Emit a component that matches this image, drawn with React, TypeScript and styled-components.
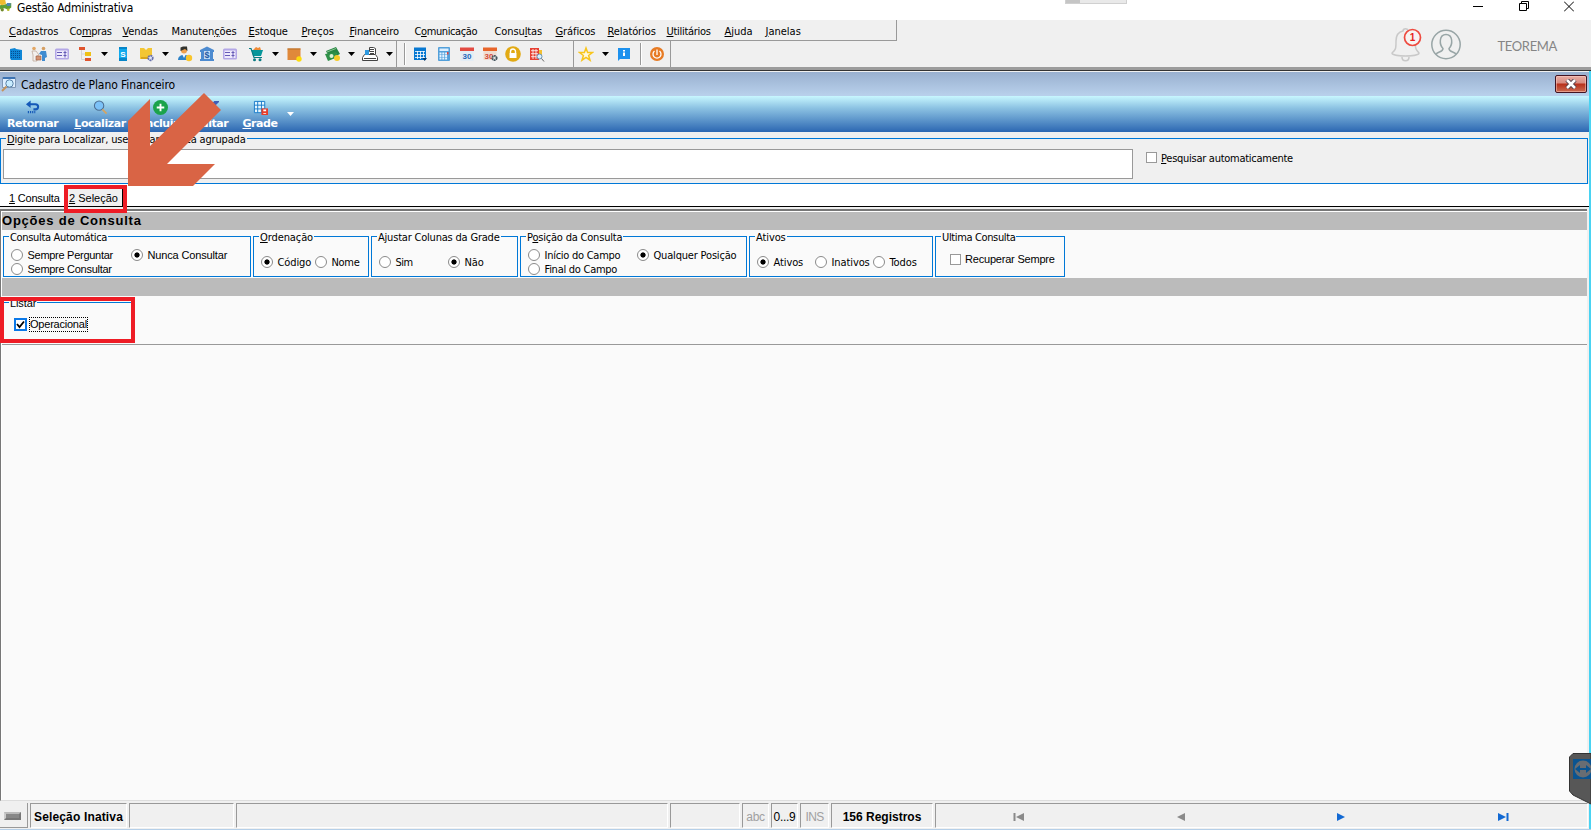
import type { ReactNode } from "react";
import styled, { createGlobalStyle } from "styled-components";

const GlobalStyle = createGlobalStyle`
    * {
        box-sizing: border-box;
    }
    body {
        margin: 0;
        overflow: hidden;
        font-family: "DejaVu Sans Condensed", "DejaVu Sans", sans-serif;
        font-stretch: condensed;
        font-size: 11px;
        line-height: 14px;
        color: #000;
        white-space: nowrap;
    }
    svg {
        display: block;
        flex: none;
    }
    u {
        text-underline-offset: 1px;
        text-decoration-thickness: 1px;
    }
`;

const Screen = styled.div`
    position: relative;
    width: 1591px;
    height: 830px;
    display: flex;
    flex-direction: column;
    overflow: hidden;
    background-color: #f0f0f0;
`;

const Spacer = styled.div`
    flex: 1;
`;

const TitleBar = styled.header`
    height: 20px;
    display: flex;
    align-items: flex-start;
    background-color: #fff;
`;

const AppTitle = styled.h1`
    margin: 1px 0 0 5px;
    font-size: 12px;
    font-weight: 400;
    letter-spacing: -0.18px;
`;

const DockHandle = styled.div`
    width: 62px;
    height: 4px;
    margin-right: 346px;
    border: 1px solid #d0d0d0;
    border-top: 0;
    background: linear-gradient(90deg, #c5c5c5 14px, #e9e9e9 14px);
`;

const WindowControls = styled.div`
    display: flex;
    gap: 35.500px;
    padding: 1px 17px 0 0;
`;

const TopArea = styled.div`
    height: 47px;
    display: flex;
`;

const Bars = styled.div`
    width: 897px;
`;

const MenuBar = styled.nav`
    height: 21px;
    display: flex;
    padding: 5px 0 0 9px;
    border-right: 1px solid #999;
    border-bottom: 1px solid #999;
`;

const MenuItem = styled.span<{ $width: number, $spacing: number }>`
    width: ${props => props.$width}px;
    letter-spacing: ${props => props.$spacing}px;
`;

const ToolBars = styled.div`
    height: 26px;
    display: flex;
`;

const ToolStrip = styled.div<{ $width: number }>`
    width: ${props => props.$width}px;
    display: flex;
    align-items: center;
    border-right: 1px solid #999;
`;

const Slot = styled.span<{ $gap: number }>`
    margin-left: ${props => props.$gap}px;
`;

const Caret = styled.i<{ $gap: number, $color?: string }>`
    width: 7px;
    height: 4px;
    flex: none;
    margin-left: ${props => props.$gap}px;
    background-color: ${props => props.$color ?? "#000"};
    clip-path: polygon(0 0, 100% 0, 50% 100%);
`;

const Grip = styled.i<{ $gap: number }>`
    width: 2px;
    height: 22px;
    margin-left: ${props => props.$gap}px;
    border-left: 1px solid #999;
    border-right: 1px solid #fff;
`;

const UserArea = styled.div`
    flex: 1;
    display: flex;
    justify-content: flex-end;
    align-items: center;
    padding: 3px 34px 0 0;
`;

const UserName = styled.span`
    margin: 2px 0 0 37px;
    font-family: Lato, sans-serif;
    font-stretch: normal;
    font-size: 13px;
    letter-spacing: -0.35px;
    color: #858585;
`;

const Child = styled.main`
    flex: 1;
    min-height: 0;
    display: flex;
    flex-direction: column;
    border-top: 3px solid #9c9c9c;
    border-bottom: 1px solid #b5cfe8;
    box-shadow: inset 0 1px #333, inset -2px 0 #49d3f2;
    padding: 2px 2px 0 0;
`;

const ChildTitle = styled.div`
    height: 24px;
    flex: none;
    display: flex;
    align-items: center;
    padding: 0 2px 0 1px;
    background: linear-gradient(#99b0cf, #b9d1ec);
    font-size: 12px;
`;

const ChildCaption = styled.span`
    flex: 1;
    padding: 2px 0 0 4px;
    letter-spacing: -0.09px;
`;

const CloseButton = styled.button`
    width: 32px;
    height: 18px;
    padding: 0;
    display: flex;
    align-items: center;
    justify-content: center;
    border: 1px solid #431422;
    border-radius: 2px;
    background: linear-gradient(#e8aca3 0, #d88b80 7px, #b8301b 8px, #ca6c52 100%);
    box-shadow: inset 0 0 0 1px rgba(255, 210, 200, 0.5);
`;

const Actions = styled.div`
    height: 36px;
    flex: none;
    display: flex;
    align-items: center;
    background: linear-gradient(#c8f7ff, #8dc3e3 33%, #2c67b2);
`;

const Action = styled.button<{ $width: number }>`
    width: ${props => props.$width}px;
    height: 36px;
    padding: 4px 0 0;
    display: flex;
    flex-direction: column;
    align-items: center;
    gap: 2px;
    border: 0;
    background: none;
    font: bold 11px/14px "DejaVu Sans", sans-serif;
    letter-spacing: -0.45px;
    color: #fff;
`;

const SearchArea = styled.div`
    height: 52px;
    flex: none;
    padding-top: 6px;
`;

const Frame = styled.fieldset<{ $width?: number, $spacing?: number }>`
    width: ${props => props.$width ? `${props.$width}px` : "auto"};
    height: 100%;
    min-width: 0;
    margin: 0;
    padding: 0;
    border: 1px solid #0078d7;
    display: flex;
    legend {
        height: 1px;
        margin-left: 5px;
        padding: 0 1px;
        line-height: 4px;
        letter-spacing: ${props => props.$spacing ?? -0.2}px;
    }
`;

const SearchFrame = styled(Frame)`
    width: 1588px;
    height: 46px;
    > div {
        display: flex;
        align-items: flex-start;
        padding: 10px 0 0 2px;
    }
`;

const SearchInput = styled.input`
    width: 1130px;
    height: 30px;
    border: 1px solid #999;
    background-color: #fff;
    margin-right: 13px;
`;

const Tabs = styled.div`
    height: 23px;
    flex: none;
    display: flex;
    background-color: #fff;
    border-bottom: 1px solid #000;
`;

const Tab = styled.div<{ $active?: boolean }>`
    width: ${props => props.$active ? 58 : 65}px;
    height: 20px;
    margin-top: 2px;
    padding: 5px 0 0 ${props => props.$active ? 4 : 9}px;
    font-family: "Liberation Sans", sans-serif;
    font-stretch: normal;
    letter-spacing: ${props => props.$active ? 0 : -0.2}px;
    background-color: ${props => props.$active ? "#f0f0f0" : "transparent"};
    border-right: ${props => props.$active ? "1px solid #000" : 0};
`;

const Page = styled.section`
    flex: 1;
    margin: 2px 2px 0 0;
    background-color: #fafafa;
    border-top: 2px solid #777;
    border-left: 1px solid #777;
    border-bottom: 1px solid #ddd;
    box-shadow: inset 1px 1px #fff;
    padding: 1px 0 0 1px;
`;

const Band = styled.h2`
    height: 18px;
    margin: 0;
    font: bold 13px/18px "Liberation Sans", sans-serif;
    letter-spacing: 0.78px;
    background-color: #bbb;
`;

const Groups = styled.div`
    height: 48px;
    display: flex;
    gap: 2px;
    padding: 6px 0 1px 1px;
`;

const Options = styled.div<{ $left: number, $top: number }>`
    display: flex;
    flex-wrap: wrap;
    align-content: flex-start;
    padding: ${props => props.$top}px 0 0 ${props => props.$left}px;
`;

const Option = styled.label<{ $width: number, $spacing?: number }>`
    width: ${props => props.$width}px;
    height: 14px;
    padding-top: 2px;
    display: flex;
    align-items: center;
    letter-spacing: ${props => props.$spacing ?? -0.1}px;
    > i {
        margin-top: -2px;
    }
`;

const SansOption = styled(Option)`
    padding-top: 0;
    font-family: "Liberation Sans", sans-serif;
    font-stretch: normal;
    > i {
        margin-top: 0;
    }
`;

const SearchOption = styled(Option)`
    margin-top: 2px;
    > i {
        margin-top: -4px;
    }
`;

const Radio = styled.i<{ $on?: boolean }>`
    width: 12px;
    height: 12px;
    flex: none;
    margin-right: 4.500px;
    border: 1px solid #8a8a8a;
    border-radius: 50%;
    background: ${props => props.$on ? "radial-gradient(circle, #000 2.2px, #fff 3px)" : "#fff"};
`;

const Box = styled.i<{ $checked?: boolean }>`
    width: ${props => props.$checked ? 13 : 11}px;
    height: ${props => props.$checked ? 13 : 11}px;
    flex: none;
    margin-right: ${props => props.$checked ? 2 : 4}px;
    border: ${props => props.$checked ? "2px solid #0a78e8" : "1px solid #999"};
    background-color: #fff;
`;

const ListArea = styled.div`
    height: 49px;
    padding-top: 6px;
    border-bottom: 1px solid #999;
`;

const ListFrame = styled(Frame)`
    width: 131px;
    height: 42px;
    border-width: 1px 0 0;
    font-family: "Liberation Sans", sans-serif;
    font-stretch: normal;
    legend {
        margin-left: 7px;
        line-height: 2px;
    }
`;

const Focused = styled.span`
    height: 15px;
    padding: 0 1px;
    line-height: 15px;
    outline: 1px dotted #000;
    outline-offset: -1px;
`;

const StatusBar = styled.footer`
    height: 28px;
    flex: none;
    display: flex;
    align-items: flex-end;
    gap: 2px;
    padding-bottom: 1px;
`;

const StatusCell = styled.div<{ $width: number, $dim?: boolean, $bold?: boolean, $spacing?: number }>`
    width: ${props => props.$width}px;
    height: 25px;
    padding-top: 2px;
    display: flex;
    align-items: center;
    justify-content: center;
    border: 1px solid #fff;
    border-top-color: #999;
    border-left-color: #999;
    font: ${props => props.$bold ? "bold 12px" : "12px"} "Liberation Sans", sans-serif;
    letter-spacing: ${props => props.$spacing ?? 0}px;
    color: ${props => props.$dim ? "#a0a0a0" : "#000"};
`;

const StatusLed = styled(StatusCell)`
    border: 0;
    border-right: 1px solid #999;
    border-bottom: 1px solid #999;
    i {
        width: 17px;
        height: 8px;
        margin-right: 3px;
        border: 2px solid #777;
        border-top-color: #bbb;
        border-left-color: #ccc;
        background-color: #888;
    }
`;

const Pager = styled(StatusCell)`
    justify-content: flex-start;
    padding-left: 77px;
    gap: 149.300px;
`;

const Arrow = styled.svg`
    position: absolute;
    left: 128px;
    top: 93px;
`;

const Highlight = styled.div<{ $x: number, $y: number, $w: number, $h: number }>`
    position: absolute;
    left: ${props => props.$x}px;
    top: ${props => props.$y}px;
    width: ${props => props.$w}px;
    height: ${props => props.$h}px;
    border: 4px solid #ee1c25;
`;

const RemoteTab = styled.svg`
    position: absolute;
    right: 0;
    top: 753px;
`;

// Text before the access key, the key, text after it, width, letter spacing
const menu: [string, string, string, number, number][] = [
    ["", "C", "adastros", 60.5, 0],
    ["Co", "m", "pras", 53, -0.3],
    ["", "V", "endas", 49, -0.1],
    ["Manuten", "ç", "ões", 77, -0.1],
    ["", "E", "stoque", 53, -0.1],
    ["", "P", "reços", 48, 0],
    ["", "F", "inanceiro", 65, -0.1],
    ["C", "o", "municação", 80, -0.4],
    ["Consu", "l", "tas", 61, -0.1],
    ["", "G", "ráficos", 52, -0.1],
    ["", "R", "elatórios", 59, -0.1],
    ["", "U", "tilitários", 58, -0.3],
    ["", "A", "juda", 41, 0],
    ["", "J", "anelas", 50, 0],
];

const glyphs: Record<string, ReactNode> = {
    building: <><path fill="#0f86d6" d="M2 3l5-1 1 1 6 1v10H3l-1-2z" /><path stroke="#064f91" strokeDasharray="1 1" d="M3 5.500h10M3 7.500h10M3 9.500h10M3 11.500h10" /></>,
    people: <><circle cx="3" cy="2.500" r="1.800" fill="#e3a765" /><circle cx="12.500" cy="2.500" r="1.800" fill="#d6a063" /><path fill="#f3f0ee" stroke="#b8a090" strokeWidth=".7" d="M1 5h4l3 4-2 1v5H2V9z" /><path fill="#3f8bd0" d="M10 5h5l1 6-2 1v3h-3V9L8 8z" /><path fill="#d49373" stroke="#96593f" strokeWidth=".6" d="M5 10h5v4H5z" /></>,
    card: <><rect x="1" y="2.500" width="14" height="11" rx="1.500" fill="#b3a7e6" /><rect x="2.500" y="4.500" width="11" height="7.500" fill="#eeeafc" /><path stroke="#655bb5" d="M3 6.500h5M3 9.500h5M9.500 6.500h3M9.500 9.500h3M11 5v6.500" /></>,
    tree: <><path fill="#e0552e" d="M2 1h6v3H2zM8 12h6v3H8z" /><path fill="#efc116" d="M8 6h6v4H8z" /><path stroke="#d3d3d3" fill="none" d="M4.500 4v9.500H8M4.500 8H8" /></>,
    phone: <><path fill="#0786c9" d="M4 1h8v14H4z" /><path fill="#10a9ed" d="M4 3h8v9H4z" /><text x="8" y="11" fontSize="8" fontWeight="700" textAnchor="middle" fill="#fff">S</text></>,
    box: <><path fill="#f3c634" d="M1 2h4l2 2 2-2h4v11H1z" /><path fill="#d9a41d" d="M2 11h9v2H2z" /><circle cx="11.500" cy="12" r="2.300" fill="#dde2f6" stroke="#6771ad" strokeWidth="1.700" strokeDasharray="1.800 .6" /></>,
    person: <><circle cx="7" cy="4.500" r="3" fill="#f0a04b" /><path fill="#32332f" d="M3.500 5V1.500L6 .5h4l.5 4.500L8 3z" /><path fill="#2d82c8" d="M1 14c0-3 2-5 6-5s6 2 6 5z" /><path fill="#eef6ff" d="M5.500 9h3L7 12z" /><circle cx="12" cy="12" r="3.200" fill="#f9c52c" /></>,
    bank: <><path fill="#4d8bd0" d="M1 4l7-3.500L15 4v2H1zM2 6h3v7H2zM11 6h3v7h-3zM1 13h14v2H1z" /><path fill="#c3dbf5" d="M5 5h6v8H5z" /><text x="8" y="12" fontSize="9" fontWeight="700" textAnchor="middle" fill="#245ba5">$</text></>,
    cart: <><path fill="#07969a" d="M3.500 4H15l-2 6H5z" /><path stroke="#087b82" strokeWidth="1.200" fill="none" d="M1 2.500h2l3 9h8" /><circle cx="6.500" cy="13.700" r="1.500" fill="#0b7b83" /><circle cx="12" cy="13.700" r="1.500" fill="#0b7b83" /><path fill="#f08a35" d="M5 4l3-3 2 1 2-1 1 3z" /></>,
    package: <><path fill="#e0893a" d="M1.500 2.500h13V14h-13z" /><path fill="#b9712c" d="M1.500 2.500h13v1h-13z" /><circle cx="13" cy="13" r="2.700" fill="#fddc0c" /></>,
    money: <><path fill="#278543" d="M1 5l10-4 4 7-10 5z" /><path stroke="#b5e0b0" strokeWidth=".7" d="M2 6l9-3.500M3 12l9-4" /><path fill="#2f9048" d="M0 8l11-2 2 5-10 4z" /><circle cx="6.500" cy="10" r="2" fill="#dff2d5" /><circle cx="12" cy="12" r="3" fill="#f7cb26" /></>,
    printer: <><path fill="#fff" stroke="#444" d="M4.500 8V5.500h3v-4h4l2 1V8M.5 14.500v-3l2-3h11l2 3v3z" /><path fill="#2f9ae0" d="M3 4h4v5H3z" /><path stroke="#444" d="M8 3.500h4M8 5.500h4M8 7.500h4M2 12.500h12" /></>,
    calendar: <><path fill="#0879d2" d="M1 1.500h12V14H1z" /><path stroke="#fff" strokeWidth=".8" d="M2 5.500h10M2 8.500h10M2 11.500h10M4.500 5v8M7.500 5v8M10.500 5v8" /><path fill="#073c70" d="M9.500 12H14l-2.300 3z" /></>,
    calculator: <><rect x="2" y="1" width="12" height="14" rx="1" fill="#53a0da" /><path fill="#dcefff" d="M3.500 2.500h9V5h-9z" /><path stroke="#e5f3ff" strokeWidth="1.800" strokeDasharray="2 .8" d="M3.500 7.500h8M3.500 10h8M3.500 12.500h8" /><path fill="#e0453d" d="M11 6h1.500v2.500H11z" /></>,
    date: <><path fill="#e3edf5" d="M1.500 3h13v12h-13z" /><path fill="#e34b42" d="M1 1.500h14V5H1z" /><text x="8" y="12.500" fontSize="8" fontWeight="700" textAnchor="middle" fill="#2467b9">30</text></>,
    dategear: <><path fill="#f0dcd0" d="M1.500 3h13v11h-13z" /><path fill="#e8652a" d="M1 1.500h14V5H1z" /><text x="7" y="12.500" fontSize="8" fontWeight="700" textAnchor="middle" fill="#d54a38">30</text><circle cx="12.500" cy="12" r="2.200" fill="#ddd" stroke="#475761" strokeWidth="1.800" strokeDasharray="1.700 .5" /></>,
    lock: <><circle cx="8" cy="8" r="7.800" fill="#e2aa14" /><path fill="#fff" d="M4.500 7h7v5h-7z" /><path fill="none" stroke="#fff" strokeWidth="1.400" d="M5.500 7V5.500a2.500 2.500 0 015 0V7" /></>,
    gridsearch: <><path fill="#f4c02f" d="M9 4h4v8H9z" /><path fill="#e64033" d="M1 2h9v12H1z" /><path stroke="#fff" strokeWidth=".8" d="M2 4.700h7M2 7.700h7M2 10.700h7M4 3v10M7 3v10" /><circle cx="10.500" cy="10.500" r="2.500" fill="#d8efff" stroke="#6b94b5" /><path stroke="#666" d="M12.500 12.500L15 15.500" /></>,
    star: <path fill="#fff9dd" stroke="#f8c51c" strokeWidth="1.500" d="M8 2l1.600 4.400 4.900.1-3.900 3 1.400 4.700-4-2.800-4 2.800 1.400-4.700-3.900-3 4.900-.1z" />,
    info: <><path fill="#1c91ee" d="M2 2h12v11H4l-2 2z" /><path fill="#fff" d="M7 4h2v1.500H7zM7 6.500h2V10H7z" /></>,
    power: <><circle cx="8" cy="8" r="7" fill="#e77b24" /><path fill="none" stroke="#fff" strokeWidth="1.300" d="M5.500 5a4 4 0 105 0M8 3.500V9" /></>,
    back: <><path fill="none" stroke="#1559b8" strokeWidth="2.200" d="M3 4.500h8c4 0 4 5.500 0 5.500H9" /><path fill="#1559b8" d="M1 4.500L6 .5v8z" /><path stroke="#1559b8" strokeWidth="2.500" strokeDasharray="1.300 1" d="M3 13h8" /></>,
    search: <><circle cx="6.500" cy="6" r="5" fill="#7cc2f8" stroke="#4d6e91" strokeWidth="1.100" /><path stroke="#d4a463" strokeWidth="2" d="M10 10l4.500 4.500" /></>,
    plus: <><circle cx="8" cy="8" r="8" fill="#1ba34b" /><path stroke="#fff" strokeWidth="2" d="M8 4v8M4 8h8" /></>,
    edit: <path fill="#3e5eb7" d="M11 1h5v1l-9 9-5 2 2-5z" />,
    grid: <><path fill="#e5f7ff" stroke="#167ac9" d="M1.500 1.500h11v12h-11zM1.500 5.500h11M1.500 9.500h11M5 1.500v12M9 1.500v12" /><path fill="#e63f2c" d="M9 9h7v7H9z" /><path fill="#fff" d="M11 10h3v2h-3zM11 14h3v1h-3z" /></>,
    app: <><path fill="#5f9e36" d="M0 7l6-1 9-2v6l-4 3-5-2-6 1z" /><path fill="#f0bb31" d="M0 0h7l1 5-5 2-3-1z" /><path fill="#4f85b9" d="M9 4h5v4H9z" /><circle cx="3" cy="13" r="2.200" fill="#718a2b" /><circle cx="11" cy="13" r="1.800" fill="#b9bb2c" /></>,
    form: <><path fill="#dfefff" stroke="#7f97b5" d="M1.500 1.500h13v10h-13z" /><path fill="#3e74b3" d="M2 1h12v2H2z" /><circle cx="8.500" cy="7.500" r="3.700" fill="#c9ecff" stroke="#5a82a8" /><path stroke="#c4935d" strokeWidth="2" d="M5.500 10.500L1 15" /></>,
};

function Icon({ name, size = 16 }: { name: string, size?: number }) {
    return <svg width={size} height={size} viewBox="0 0 16 16" fontFamily="Liberation Sans">{glyphs[name]}</svg>;
}

// An entry without a name is a drop-down caret
type Tool = [gap: number, name?: string];

const mainTools: Tool[] = [
    [8, "building"], [7, "people"], [7, "card"], [7, "tree"], [8],
    [7, "phone"], [8, "box"], [7], [8, "person"], [6, "bank"], [7, "card"],
    [10, "cart"], [8], [7, "package"], [8], [8, "money"], [7], [7, "printer"], [8],
];

const agendaTools: Tool[] = [
    [7, "calendar"], [7, "calculator"], [7, "date"], [7, "dategear"], [7, "lock"], [8, "gridsearch"],
];

function Tools({ items }: { items: Tool[] }) {
    return (
        <>
            {items.map(([gap, name], i) => name
                ? <Slot key={i} $gap={gap}><Icon name={name} /></Slot>
                : <Caret key={i} $gap={gap} />
            )}
        </>
    );
}

function PageArrow({ last, back, color }: { last?: boolean, back?: boolean, color: string }) {
    return (
        <svg width="12" height="10" viewBox="0 0 12 10">
            <g transform={back ? "matrix(-1 0 0 1 12 0)" : undefined}>
                <path fill={color} d="M1 1l8 4-8 4z" />
                {last && <path fill={color} d="M9.500 1h2v8h-2z" />}
            </g>
        </svg>
    );
}

function App() {
    return (
        <Screen>
            <GlobalStyle />
            <TitleBar>
                <Icon name="app" size={12} />
                <AppTitle>Gestão Administrativa</AppTitle>
                <Spacer />
                <DockHandle />
                <WindowControls>
                    <svg width="10" height="11"><path stroke="#000" d="M0 5.500h10" /></svg>
                    <svg width="10" height="11"><path fill="none" stroke="#000" d="M.5 2.500h7v7h-7zM2.500 2.500v-2h7v7h-2" /></svg>
                    <svg width="10" height="11"><path stroke="#000" d="M0 .5l10 10M10 .5l-10 10" /></svg>
                </WindowControls>
            </TitleBar>
            <TopArea>
                <Bars>
                    <MenuBar>
                        {menu.map(([before, key, after, width, spacing]) => (
                            <MenuItem key={before + key + after} $width={width} $spacing={spacing}>
                                {before}<u>{key}</u>{after}
                            </MenuItem>
                        ))}
                    </MenuBar>
                    <ToolBars>
                        <ToolStrip $width={397}><Tools items={mainTools} /></ToolStrip>
                        <ToolStrip $width={177}>
                            <Grip $gap={7} />
                            <Tools items={agendaTools} />
                        </ToolStrip>
                        <ToolStrip $width={97}>
                            <Tools items={[[4, "star"], [8], [7, "info"]]} />
                            <Grip $gap={8} />
                            <Tools items={[[7, "power"]]} />
                        </ToolStrip>
                    </ToolBars>
                </Bars>
                <UserArea>
                    <svg width="32" height="36" viewBox="0 0 32 36">
                        <path fill="none" stroke="#c9c9c9" strokeWidth="1.500" d="M12 4c0-3 5-3 5 0 5 1 7 5 7 10 0 7 1 9 4 12 0 4-27 4-27 0 4-3 4-5 4-12 0-5 2-9 7-10zM11 30c0 5 7 5 7 0" />
                        <circle cx="21.500" cy="10.500" r="8" fill="#f7f3f2" stroke="#ee4b40" strokeWidth="1.700" />
                        <text x="21.500" y="14" fontFamily="Liberation Sans" fontSize="10" fontWeight="700" textAnchor="middle" fill="#e8221c">1</text>
                    </svg>
                    <svg width="38" height="32" viewBox="0 0 38 32">
                        <g fill="none" stroke="#98a5a6" strokeWidth="1.500">
                            <circle cx="23" cy="15.500" r="14.200" />
                            <path d="M13 25.500c1-3 7-2 7-6-4-4-4-14 3-14s7 10 3 14c0 4 6 3 7 6" />
                        </g>
                    </svg>
                    <UserName>TEOREMA</UserName>
                </UserArea>
            </TopArea>
            <Child>
                <ChildTitle>
                    <Icon name="form" />
                    <ChildCaption>Cadastro de Plano Financeiro</ChildCaption>
                    <CloseButton>
                        <svg width="12" height="10"><path stroke="#54404b" strokeWidth="4.500" d="M2 1l8 8M10 1L2 9" /><path stroke="#fff" strokeWidth="2.500" d="M2 1l8 8M10 1L2 9" /></svg>
                    </CloseButton>
                </ChildTitle>
                <Actions>
                    <Action $width={65}><Icon name="back" size={15} /><span>Retornar</span></Action>
                    <Action $width={70}><Icon name="search" size={15} /><span><u>L</u>ocalizar</span></Action>
                    <Action $width={50}><Icon name="plus" size={15} /><span>Incluir</span></Action>
                    <Action $width={52}><Icon name="edit" size={15} /><span>Editar</span></Action>
                    <Action $width={46}><Icon name="grid" size={15} /><span><u>G</u>rade</span></Action>
                    <Caret $gap={4} $color="#fff" />
                </Actions>
                <SearchArea>
                    <SearchFrame $spacing={-0.17}>
                        <legend><u>D</u>igite para Localizar, use % para busca agrupada</legend>
                        <div>
                            <SearchInput />
                            <SearchOption $width={160} $spacing={-0.27}><Box /><span><u>P</u>esquisar automaticamente</span></SearchOption>
                        </div>
                    </SearchFrame>
                </SearchArea>
                <Tabs>
                    <Tab><u>1</u> Consulta</Tab>
                    <Tab $active><u>2</u> Seleção</Tab>
                </Tabs>
                <Page>
                    <Band>Opções de Consulta</Band>
                    <Groups>
                        <Frame $width={248} $spacing={-0.33}>
                            <legend>Consulta Automática</legend>
                            <Options $left={7} $top={11}>
                                <SansOption $width={120} $spacing={-0.28}><Radio />Sempre Perguntar</SansOption>
                                <SansOption $width={110} $spacing={-0.15}><Radio $on />Nunca Consultar</SansOption>
                                <SansOption $width={120} $spacing={-0.28}><Radio />Sempre Consultar</SansOption>
                            </Options>
                        </Frame>
                        <Frame $width={116} $spacing={-0.1}>
                            <legend><u>O</u>rdenação</legend>
                            <Options $left={7} $top={18}>
                                <Option $width={54}><Radio $on />Código</Option>
                                <Option $width={50} $spacing={-0.3}><Radio />Nome</Option>
                            </Options>
                        </Frame>
                        <Frame $width={147}>
                            <legend>Ajustar Colunas da Grade</legend>
                            <Options $left={7} $top={18}>
                                <Option $width={69} $spacing={-0.5}><Radio />Sim</Option>
                                <Option $width={60}><Radio $on />Não</Option>
                            </Options>
                        </Frame>
                        <Frame $width={227}>
                            <legend>P<u>o</u>sição da Consulta</legend>
                            <Options $left={7} $top={11}>
                                <Option $width={109} $spacing={-0.26}><Radio />Início do Campo</Option>
                                <Option $width={108} $spacing={-0.18}><Radio $on />Qualquer Posição</Option>
                                <Option $width={109} $spacing={-0.26}><Radio />Final do Campo</Option>
                            </Options>
                        </Frame>
                        <Frame $width={184} $spacing={-0.1}>
                            <legend>Ativos</legend>
                            <Options $left={7} $top={18}>
                                <Option $width={58}><Radio $on />Ativos</Option>
                                <Option $width={58}><Radio />Inativos</Option>
                                <Option $width={55}><Radio />Todos</Option>
                            </Options>
                        </Frame>
                        <Frame $width={130} $spacing={-0.36}>
                            <legend>Ultima Consulta</legend>
                            <Options $left={14} $top={15}>
                                <SansOption $width={110} $spacing={-0.2}><Box />Recuperar Sempre</SansOption>
                            </Options>
                        </Frame>
                    </Groups>
                    <Band />
                    <ListArea>
                        <ListFrame $spacing={-0.1}>
                            <legend>Listar</legend>
                            <Options $left={12} $top={14}>
                                <SansOption $width={100} $spacing={-0.22}>
                                    <Box $checked><svg width="9" height="9"><path fill="none" stroke="#000" strokeWidth="1.800" d="M1 4l2.500 3L8 1.500" /></svg></Box>
                                    <Focused>Operacional</Focused>
                                </SansOption>
                            </Options>
                        </ListFrame>
                    </ListArea>
                </Page>
                <StatusBar>
                    <StatusLed $width={28}><i /></StatusLed>
                    <StatusCell $width={97} $bold $spacing={0.15}>Seleção Inativa</StatusCell>
                    <StatusCell $width={105} />
                    <StatusCell $width={432} />
                    <StatusCell $width={70} />
                    <StatusCell $width={27} $dim $spacing={-0.3}>abc</StatusCell>
                    <StatusCell $width={27} $spacing={-0.3}>0...9</StatusCell>
                    <StatusCell $width={29} $dim $spacing={-0.7}>INS</StatusCell>
                    <StatusCell $width={102} $bold>156 Registros</StatusCell>
                    <Pager $width={653}>
                        <PageArrow back last color="#8a8a8a" />
                        <PageArrow back color="#8a8a8a" />
                        <PageArrow color="#1269d3" />
                        <PageArrow last color="#1269d3" />
                    </Pager>
                </StatusBar>
            </Child>
            <Arrow width="94" height="93"><path fill="#d96445" d="M22 6L0 28v65h65l22-22H39L93 17 76 0 22 53z" /></Arrow>
            <Highlight $x={64} $y={185} $w={63} $h={28} />
            <Highlight $x={0} $y={297} $w={135} $h={46} />
            <RemoteTab width="22" height="52">
                <path fill="#575757" stroke="#333" d="M22 .5H4L.5 4v34L4 42l18 9z" />
                <path fill="#0a5491" d="M4 6h18v20H4z" />
                <circle cx="14" cy="16" r="8.500" fill="#686d73" />
                <path fill="#0a5491" d="M6 16l5-4v3h6v-3l5 4-5 4v-3h-6v3z" />
            </RemoteTab>
        </Screen>
    );
}
export default App;
